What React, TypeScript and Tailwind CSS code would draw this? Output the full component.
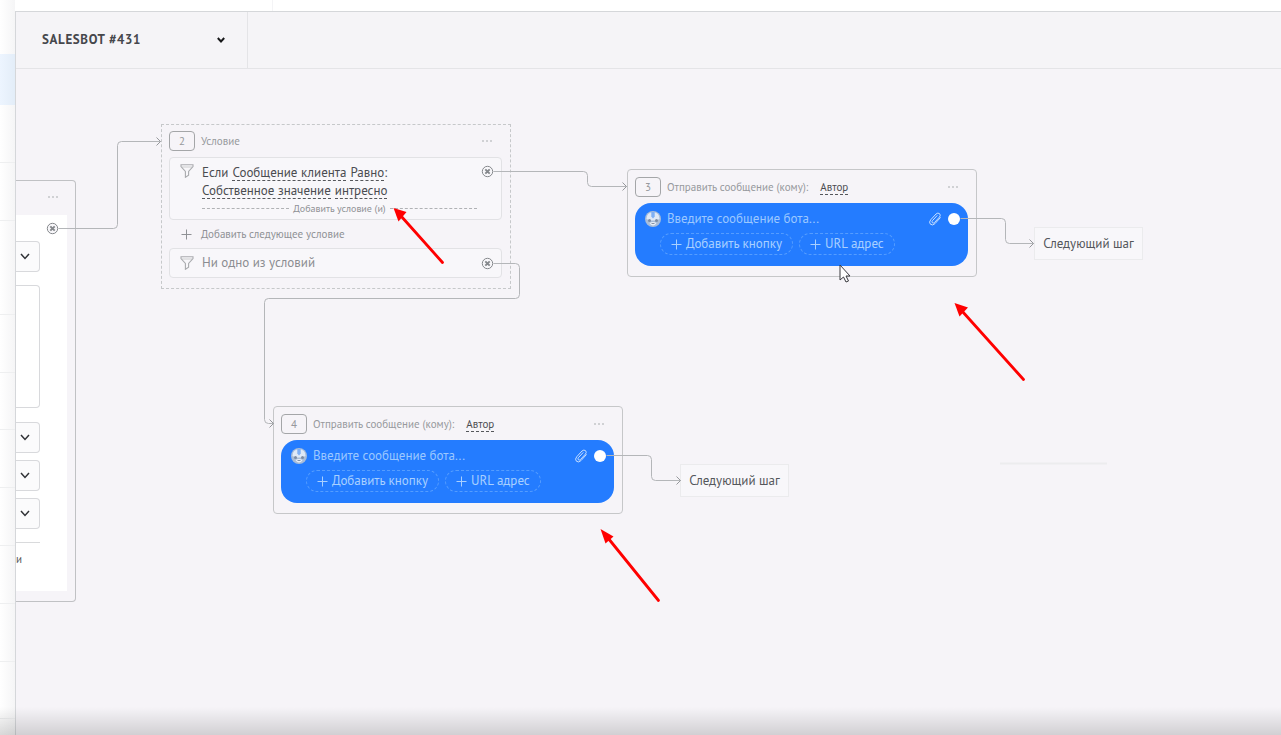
import type { ReactNode } from "react";

const STRIP_ROWS = ["h-[58px]", "h-[58px]", "h-[94px]", "h-[58px]", "h-[57px]", "h-[58px]", "h-[58px]", "h-[58px]", "h-[58px]", "h-[57px]"];

const WIRES = [
  "M58 228H113Q117 228 117 224V145Q117 141 121 141H160",
  "M493 171H583Q587 171 587 175V182Q587 186 591 186H626",
  "M493 263H515Q519 263 519 267V294Q519 298 515 298H268Q264 298 264 302V419Q264 423 268 423H273",
  "M960 218H1001Q1005 218 1005 222V239Q1005 243 1009 243H1033",
  "M606 455H647Q651 455 651 459V476Q651 480 655 480H680",
];

const WIRE_TIPS = ["M156 137L160 141L156 145", "M622 182L626 186L622 190", "M269 419L273 423L269 427", "M1029 239L1033 243L1029 247", "M676 476L680 480L676 484"];

const CROSS_PORTS = [
  [52, 228],
  [487, 171],
  [487, 263],
];

const POINTERS = [
  { line: "M442.500 262.500L401 216", head: "M393.500 208L406.500 212L398.500 221.500Z" },
  { line: "M1023.500 379.500L962 311", head: "M954.500 303L968 307.500L959.500 316.500Z" },
  { line: "M658.500 600.500L608 538", head: "M600.500 529L613.500 536.500L605.500 543.500Z" },
];

function Chevron({ className }: { className: string }) {
  return (
    <svg className={className} viewBox="0 0 10 7" fill="none" stroke="currentColor" aria-hidden="true">
      <path d="M1 1L5 5.4L9 1" />
    </svg>
  );
}

function Funnel() {
  return (
    <svg className="h-3.5 w-3.5 shrink-0" viewBox="0 0 14 14" fill="none" stroke="#a9abae" strokeWidth="1.1" aria-hidden="true">
      <path d="M1 .8H13V2.5L8.6 7.4V11.3L5.4 13.3V7.4L1 2.5Z" />
      <path d="M2 3H12" opacity=".5" />
    </svg>
  );
}

function Plus({ className }: { className: string }) {
  return (
    <svg className={className} viewBox="0 0 11 11" stroke="currentColor" aria-hidden="true">
      <path d="M5.5 .5V10.5M.5 5.5H10.5" />
    </svg>
  );
}

function Dots() {
  return (
    <button type="button" aria-label="Меню" className="ml-auto flex h-4 items-center gap-0.5">
      <i className="h-0.5 w-0.5 bg-[#d0d1d4]" />
      <i className="h-0.5 w-0.5 bg-[#d0d1d4]" />
      <i className="h-0.5 w-0.5 bg-[#d0d1d4]" />
    </button>
  );
}

function NodeHeader({ number, children }: { number: number; children: ReactNode }) {
  return (
    <header className="flex h-5 items-center pr-2.5 text-[11px] text-[#97999d]">
      <span className="mr-1.5 flex h-5 w-[26px] items-center justify-center rounded-sm border border-[#a4a6a8]">{number}</span>
      {children}
      <Dots />
    </header>
  );
}

function Dashed({ children }: { children: ReactNode }) {
  return (
    <button type="button" className="h-4 border-b border-dashed border-[#55575b] leading-4 text-[#4a4c50]">
      {children}
    </button>
  );
}

function BotFace() {
  return (
    <svg className="h-4 w-4 shrink-0" viewBox="0 0 16 16" aria-hidden="true">
      <circle cx="8" cy="8" r="8" fill="#a9bdd8" />
      <path d="M1.500 8Q1.5 1.500 8 1Q14.500 1.500 14.500 8L11 9.500H5Z" fill="#dfe9f6" />
      <path d="M6.300 1H9.700V5.500L8 7.500L6.300 5.500Z" fill="#7fb0f4" />
      <circle cx="4.500" cy="9.500" r="1.500" fill="#7d8ca3" />
      <circle cx="11.500" cy="9.500" r="1.500" fill="#7d8ca3" />
      <path d="M4.500 12Q8 10 11.500 12Q10 14.500 8 14.500Q6 14.500 4.500 12Z" fill="#e9eef5" />
      <path d="M6.500 12.500H9.500" stroke="#8492a8" />
    </svg>
  );
}

function Clip() {
  return (
    <svg className="h-3.5 w-3.5" viewBox="0 0 14 14" fill="none" stroke="#c8e0ff" strokeLinecap="round" aria-hidden="true">
      <path d="M12.300 5.700L7 11.600Q4.500 14 2.400 12.200Q.6 10.200 2.700 7.800L8 2Q9.900 .3 11.600 1.700Q13 3.300 11.500 5L6.400 10.600Q5.200 11.500 4.300 10.700Q3.500 9.800 4.400 8.700L9 3.700" />
    </svg>
  );
}

function PillButton({ children }: { children: ReactNode }) {
  return (
    <button type="button" className="flex h-[22px] items-center gap-1 rounded-full border border-dashed border-[#559dff] px-2.5 text-[13px] text-[#a9d0ff]">
      <Plus className="h-[11px] w-[11px]" />
      {children}
    </button>
  );
}

function MessageNode({ number, place }: { number: number; place: string }) {
  return (
    <section className={`absolute w-[350px] rounded-sm border border-[#c6c7c9] pt-[7px] pr-2 pb-2.5 pl-[7px] ${place}`}>
      <NodeHeader number={number}>
        <span>Отправить сообщение (кому):</span>
        <span className="ml-3 flex">
          <Dashed>Автор</Dashed>
        </span>
      </NodeHeader>
      <div className="mt-1.5 h-[63px] rounded-2xl bg-[#247cff] pt-2">
        <div className="flex h-4 items-center pl-2.5 pr-2">
          <BotFace />
          <input
            aria-label="Сообщение бота"
            placeholder="Введите сообщение бота..."
            className="ml-1.5 h-4 min-w-0 flex-1 bg-transparent text-[13px] text-white outline-none placeholder:text-[#9cc8ff]"
          />
          <button type="button" aria-label="Файл">
            <Clip />
          </button>
          <span className="ml-1.5 h-3 w-3 rounded-full bg-white" />
        </div>
        <div className="mt-1.5 flex gap-1.5 pl-[25px]">
          <PillButton>Добавить кнопку</PillButton>
          <PillButton>URL адрес</PillButton>
        </div>
      </div>
    </section>
  );
}

function ConditionNode() {
  return (
    <section className="absolute top-[55px] left-[145px] w-[350px] border border-dashed border-[#c6c8ca] pt-1.5 pr-2 pb-2.5 pl-[7px]">
      <NodeHeader number={2}>Условие</NodeHeader>
      <div className="mt-1.5 flex h-[63px] rounded-sm border border-[#e2e2e5] bg-[#f8f7fa] pt-1.5 pl-2.5">
        <Funnel />
        <div className="ml-2 w-[275px] text-[13px] text-[#4a4c50]">
          <p className="flex h-[18px] items-center gap-1">
            Если <Dashed>Сообщение клиента</Dashed>
            <span className="flex items-center">
              <Dashed>Равно</Dashed>:
            </span>
          </p>
          <p className="flex h-[18px] items-center gap-1">
            <Dashed>Собственное значение</Dashed> <Dashed>интресно</Dashed>
          </p>
          <button type="button" className="flex h-4 w-full items-center gap-1 text-[10px] text-[#8f9195]">
            <i className="flex-1 border-t border-dashed border-[#b0b2b5]" />
            Добавить условие (и)
            <i className="flex-1 border-t border-dashed border-[#b0b2b5]" />
          </button>
        </div>
      </div>
      <button type="button" className="flex h-7 items-center gap-[9px] pl-3 text-[11px] text-[#8f9195]">
        <Plus className="h-[11px] w-[11px]" />
        Добавить следующее условие
      </button>
      <div className="flex h-[30px] items-center gap-2 rounded-sm border border-[#e2e2e5] bg-[#f8f7fa] pl-2.5 text-[13px] text-[#8b8d91]">
        <Funnel />
        Ни одно из условий
      </div>
    </section>
  );
}

function PickBox({ gap }: { gap: string }) {
  return (
    <div className={`relative h-[31px] w-6 ${gap}`}>
      <select aria-label="Параметр" className="h-full w-full appearance-none rounded-r border border-l-0 border-[#d8d9dc] bg-[#fbfbfc]" />
      <Chevron className="pointer-events-none absolute top-3 left-1 h-[7px] w-2.5 stroke-[1.5] text-[#303236]" />
    </div>
  );
}

function SettingsNode() {
  return (
    <section className="absolute top-[111px] left-0 w-[60px] rounded-r-sm border border-l-0 border-[#c0c1c4] pt-2 pb-2.5">
      <div className="flex h-[26px] items-start pr-[17px]">
        <Dots />
      </div>
      <div className="mr-2 h-[376px] bg-white pt-[26px]">
        <PickBox gap="" />
        <textarea aria-label="Текст" className="mt-[13px] block h-[123px] w-6 resize-none rounded-r border border-l-0 border-[#d8d9dc] bg-white" />
        <PickBox gap="mt-3.5" />
        <PickBox gap="mt-[7px]" />
        <PickBox gap="mt-[7px]" />
        <p className="mt-[13px] w-6 border-t border-[#d9dadc] pt-2 text-[11px] leading-4 text-[#55575b]">и</p>
      </div>
    </section>
  );
}

function NextStep({ place }: { place: string }) {
  return (
    <button type="button" className={`absolute flex h-[33px] w-[109px] items-center justify-center border border-[#ebebed] bg-[#f8f7fa] text-[13px] text-[#55575b] ${place}`}>
      Следующий шаг
    </button>
  );
}

function Overlay() {
  return (
    <svg className="pointer-events-none absolute inset-0 h-full w-full overflow-hidden" aria-hidden="true">
      <g transform="translate(-16 -69)" fill="none">
        <path d="M1000 463.500H1107" stroke="#ececee" strokeWidth="2" />
        <g transform="translate(.5 .5)" stroke="#b4b6b9">
          {WIRES.map((d) => (
            <path key={d} d={d} />
          ))}
          {WIRE_TIPS.map((d) => (
            <path key={d} d={d} stroke="#96989c" />
          ))}
        </g>
        {CROSS_PORTS.map(([x, y]) => (
          <g key={`${x}-${y}`} transform={`translate(${x + 0.5} ${y + 0.5})`} stroke="#85888c">
            <circle r="5.200" fill="#f8f7fa" />
            <path d="M-2.200 -2.200L2.200 2.200M2.200 -2.200L-2.200 2.200" strokeWidth="1.900" />
          </g>
        ))}
        {POINTERS.map((p) => (
          <g key={p.line}>
            <path d={p.line} stroke="#ff0000" strokeWidth="2.800" strokeLinecap="round" />
            <path d={p.head} fill="#ff0000" />
          </g>
        ))}
        <path d="M840 265V280L843.500 277L846 282L848.500 281L846 276H850Z" fill="#fff" stroke="#3a3a3f" />
      </g>
    </svg>
  );
}

export default function App() {
  return (
    <div className="relative flex h-screen overflow-hidden bg-white font-['PT_Sans','Noto_Sans',sans-serif]">
      <aside className="w-[15px] shrink-0 bg-linear-to-r from-white to-[#f5f5f6]">
        <div className="h-[54px]" />
        <div className="h-[51px] bg-linear-to-r from-[#edf5ff] to-[#e3edf8]" />
        {STRIP_ROWS.map((h, i) => (
          <div key={i} className={`border-b border-[#eeeff0] ${h}`} />
        ))}
      </aside>
      <div className="flex min-w-0 flex-1 flex-col">
        <div className="h-[11px] w-[258px] shrink-0 border-r border-[#f4f4f6]" />
        <main className="flex min-h-0 flex-1 flex-col border-t border-l border-[#d5d7da] bg-[#f6f4f8]">
          <header className="flex h-[57px] shrink-0 border-b border-[#e4e4e7] bg-[#f5f4f7]">
            <button type="button" className="flex w-[232px] items-center justify-between border-r border-[#e4e4e7] pr-[22px] pl-[26px] text-[13px] font-bold tracking-wider text-[#45474c]">
              SALESBOT #431
              <Chevron className="h-1.5 w-2 stroke-[2.4] text-[#17181a]" />
            </button>
          </header>
          <div className="relative flex-1 overflow-hidden">
            <SettingsNode />
            <ConditionNode />
            <MessageNode number={3} place="top-[100px] left-[611px]" />
            <MessageNode number={4} place="top-[337px] left-[257px]" />
            <NextStep place="top-[158px] left-[1018px]" />
            <NextStep place="top-[395px] left-[664px]" />
            <Overlay />
          </div>
        </main>
      </div>
      <div className="pointer-events-none absolute inset-x-0 bottom-0 h-7 bg-linear-to-b from-transparent to-black/15" />
    </div>
  );
}
